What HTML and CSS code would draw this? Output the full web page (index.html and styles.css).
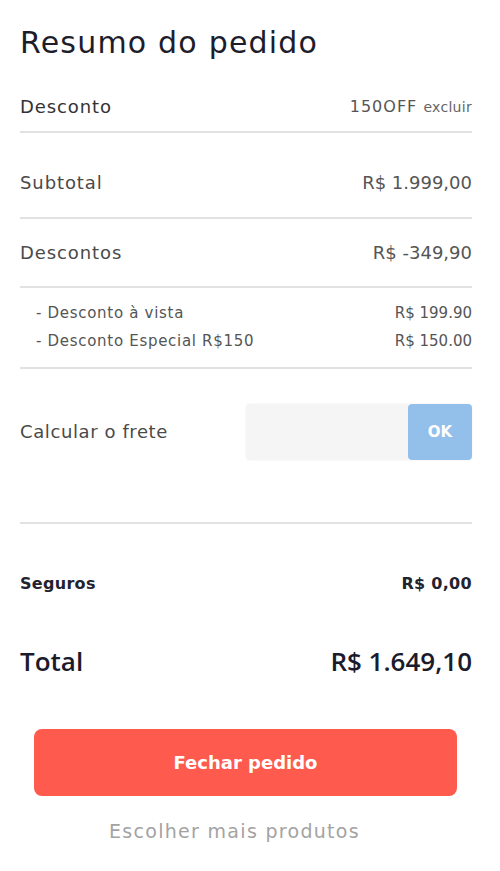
FILE: index.html
```html
<!DOCTYPE html>
<html lang="pt-BR">
<head>
<meta charset="utf-8">
<title>Resumo do pedido</title>
<link rel="stylesheet" href="styles.css">
</head>
<body>
<main class="summary">
  <h1 class="title">Resumo do pedido</h1>

  <div class="row coupon">
    <span class="label-dark">Desconto</span>
    <span class="coupon-code">150OFF <a class="remove" href="#">excluir</a></span>
  </div>

  <div class="row subtotal">
    <span>Subtotal</span>
    <span class="val">R$ 1.999,00</span>
  </div>

  <div class="row discounts">
    <span>Descontos</span>
    <span class="val">R$ -349,90</span>
  </div>

  <div class="details">
    <div class="detail"><span>- Desconto à vista</span><span class="val">R$ 199.90</span></div>
    <div class="detail"><span>- Desconto Especial R$150</span><span class="val">R$ 150.00</span></div>
  </div>

  <div class="row shipping">
    <span class="ship-label">Calcular o frete</span>
    <form class="zip">
      <input class="zip-input" type="text" aria-label="CEP">
      <button class="zip-ok" type="button">OK</button>
    </form>
  </div>

  <div class="totals">
    <div class="insurance"><span>Seguros</span><span>R$ 0,00</span></div>
    <div class="total"><span>Total</span><span>R$ 1.649,10</span></div>
  </div>

  <button class="checkout" type="button">Fechar pedido</button>
  <a class="more" href="#">Escolher mais produtos</a>
</main>
</body>
</html>
```
FILE: styles.css
```css
* { box-sizing: border-box; }
html, body { margin: 0; background: #fff; }
body {
  font-family: "DejaVu Sans", "Noto Sans", sans-serif;
  color: #4a4a4a;
}
.summary {
  padding: 0 28px 0 20px;
  display: flex;
  flex-direction: column;
}
.title {
  margin: 0;
  height: 85px;
  display: flex;
  align-items: center;
  font-size: 30px;
  font-weight: 400;
  letter-spacing: 1.2px;
  color: #1d1d2b;
}
.row {
  display: flex;
  justify-content: space-between;
  align-items: center;
  font-size: 18px;
  line-height: 20px;
  letter-spacing: 0.9px;
  border-bottom: 2px solid #e2e2e2;
}
.val { letter-spacing: 0; color: #555; }
.coupon { padding: 12px 0 14px; }
.label-dark { color: #333; }
.coupon-code { font-size: 16px; letter-spacing: 1px; color: #555; }
.remove { font-size: 14px; letter-spacing: 0.3px; color: #666; text-decoration: none; }
.subtotal { padding: 40px 0 24px; }
.discounts { padding: 24px 0 23px; }
.details {
  padding: 11px 0 12px 16px;
  border-bottom: 2px solid #e2e2e2;
  font-size: 15px;
  letter-spacing: 0.7px;
  color: #555;
}
.detail {
  display: flex;
  justify-content: space-between;
  line-height: 28px;
}
.shipping { padding: 35px 0 62px; }
.ship-label { letter-spacing: 0.6px; }
.zip {
  display: flex;
  margin: 0;
  width: 226px;
  height: 56px;
  border-radius: 4px;
  box-shadow: 0 0 2px rgba(0,0,0,0.08);
}
.zip-input {
  flex: 1;
  min-width: 0;
  border: 0;
  background: #f5f5f5;
  border-radius: 4px 0 0 4px;
}
.zip-ok {
  width: 64px;
  border: 0;
  border-radius: 4px;
  background: #93c0ea;
  color: #fff;
  font-family: inherit;
  font-weight: 700;
  font-size: 15px;
}
.totals { padding-top: 48px; }
.insurance, .total {
  display: flex;
  justify-content: space-between;
  align-items: center;
  font-weight: 700;
  color: #23232f;
}
.insurance { font-size: 16px; line-height: 24px; letter-spacing: 0.3px; }
.total {
  margin-top: 47px;
  font-family: "Open Sans", "DejaVu Sans", sans-serif;
  font-weight: 600;
  font-size: 26px;
  line-height: 36px;
  color: #1b1b2b;
}
.checkout {
  margin: 50px 15px 0 14px;
  height: 67px;
  border: 0;
  border-radius: 8px;
  background: #fe5a4e;
  color: #fff;
  font-family: inherit;
  font-size: 18px;
  font-weight: 700;
}
.more {
  margin-top: 23px;
  align-self: center;
  margin-right: 23px;
  font-size: 19px;
  line-height: 24px;
  letter-spacing: 1.3px;
  color: #a3a3a3;
  text-decoration: none;
}
```
